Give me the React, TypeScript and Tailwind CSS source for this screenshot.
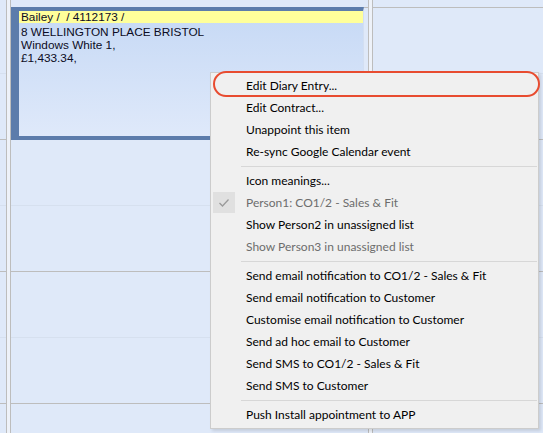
import React from "react";

type MenuEntry =
  | { kind: "item"; label: string; disabled?: boolean; checked?: boolean }
  | { kind: "sep" };

const menu: MenuEntry[] = [
  { kind: "item", label: "Edit Diary Entry..." },
  { kind: "item", label: "Edit Contract..." },
  { kind: "item", label: "Unappoint this item" },
  { kind: "item", label: "Re-sync Google Calendar event" },
  { kind: "sep" },
  { kind: "item", label: "Icon meanings..." },
  { kind: "item", label: "Person1: CO1/2 - Sales & Fit", disabled: true, checked: true },
  { kind: "item", label: "Show Person2 in unassigned list" },
  { kind: "item", label: "Show Person3 in unassigned list", disabled: true },
  { kind: "sep" },
  { kind: "item", label: "Send email notification to CO1/2 - Sales & Fit" },
  { kind: "item", label: "Send email notification to Customer" },
  { kind: "item", label: "Customise email notification to Customer" },
  { kind: "item", label: "Send ad hoc email to Customer" },
  { kind: "item", label: "Send SMS to CO1/2 - Sales & Fit" },
  { kind: "item", label: "Send SMS to Customer" },
  { kind: "sep" },
  { kind: "item", label: "Push Install appointment to APP" },
];

// Half-hour slots: even index = hour line, odd index = half-hour line
const slots = [0, 1, 2, 3, 4, 5, 6];

function DayColumn({
  className,
  firstLine = true,
  children,
}: {
  className: string;
  firstLine?: boolean;
  children?: React.ReactNode;
}) {
  return (
    <div className={`relative flex flex-col ${className}`}>
      <div className="h-[7px] shrink-0" />
      {slots.map((i) => (
        <div
          key={i}
          className={`h-[66px] shrink-0 border-t ${
            i === 0 && !firstLine
              ? "border-transparent"
              : i % 2 === 0
              ? "border-[#bdbdbd]"
              : "border-[#d6e0ef]"
          }`}
        />
      ))}
      {children}
    </div>
  );
}

function Divider() {
  return <div className="w-[5px] shrink-0 border-x border-[#bdbdbd] bg-[#eef2f9]" />;
}

function Appointment() {
  return (
    <div
      className="absolute left-0 top-[7px] h-[133px] w-[353px] border-t-4 border-b-4 border-l-8 border-r border-[#5c7cab] border-r-[#d3dff2] bg-gradient-to-b from-[#c6d9f5] to-[#dfe9fa] text-[11.8px] leading-[13px] text-[#0c0c24]"
      style={{ fontFamily: '"Liberation Sans", Arial, sans-serif' }}
    >
      <div className="h-[12px] bg-[#ffff9a] pl-[2px] leading-[12px]">Bailey /&nbsp;&nbsp;/ 4112173 /</div>
      <div className="pl-[2px] pt-[3px]">
        <div>8 WELLINGTON PLACE BRISTOL</div>
        <div>Windows White 1,</div>
        <div>£1,433.34,</div>
      </div>
    </div>
  );
}

function CheckBox() {
  return (
    <div className="absolute left-[2px] top-0 flex h-[21px] w-[22px] items-center justify-center bg-[#e0e0e0]">
      <svg width="12" height="10" viewBox="0 0 12 10">
        <polyline points="1.5,5 4.5,8 10.5,1.5" fill="none" stroke="#9a9a9a" strokeWidth="1.3" />
      </svg>
    </div>
  );
}

function ContextMenu() {
  return (
    <div
      className="absolute left-[210px] top-[72px] w-[329px] border border-[#cccccc] bg-[#f0f0f0] py-[2px] text-[12px] shadow-[2px_2px_3px_rgba(0,0,0,0.12)]"
      style={{ fontFamily: 'Lato, "Noto Sans", sans-serif' }}
    >
      {menu.map((m, i) =>
        m.kind === "sep" ? (
          <div key={i} className="flex h-[7px] items-center pl-[30px] pr-[1px]">
            <div className="h-px w-full bg-[#d7d7d7]" />
          </div>
        ) : (
          <div
            key={i}
            className={`relative flex h-[22px] items-center whitespace-nowrap pl-[35px] ${
              m.disabled ? "text-[#6d6d6d]" : "text-black"
            }`}
          >
            {m.checked && <CheckBox />}
            {m.label}
          </div>
        )
      )}
    </div>
  );
}

export default function App() {
  return (
    <div className="relative h-[433px] w-[543px] overflow-hidden bg-[#dfe9f9]">
      <div className="flex h-full">
        <DayColumn className="w-[6px] shrink-0" firstLine={false} />
        <Divider />
        <DayColumn className="w-[357px] shrink-0">
          <Appointment />
        </DayColumn>
        <Divider />
        <DayColumn className="flex-1" />
      </div>
      <ContextMenu />
      {/* callout around the first menu command */}
      <div className="pointer-events-none absolute left-[213px] top-[71px] h-[26px] w-[327px] rounded-[13px] border-[2.5px] border-[#e84c30]" />
    </div>
  );
}
